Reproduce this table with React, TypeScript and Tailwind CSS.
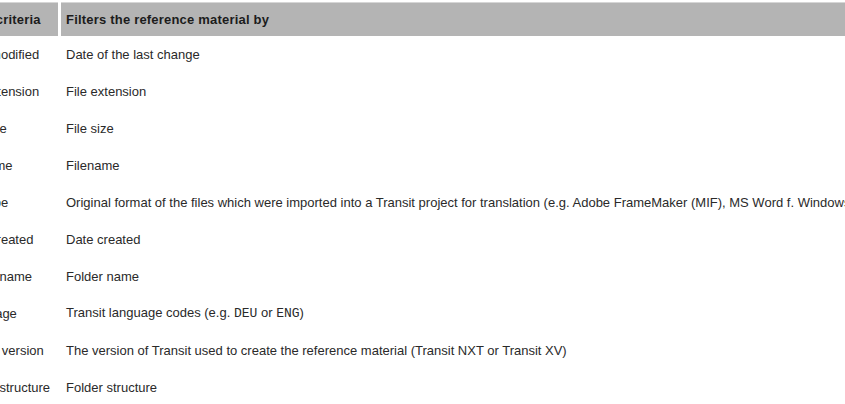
const ROWS: { criterion: string; description: React.ReactNode }[] = [
  { criterion: "Date modified", description: "Date of the last change" },
  { criterion: "File extension", description: "File extension" },
  { criterion: "File size", description: "File size" },
  { criterion: "Filename", description: "Filename" },
  {
    criterion: "File type",
    description:
      "Original format of the files which were imported into a Transit project for translation (e.g. Adobe FrameMaker (MIF), MS Word f. Windows)",
  },
  { criterion: "Date created", description: "Date created" },
  { criterion: "Folder name", description: "Folder name" },
  {
    criterion: "Language",
    description: (
      <>
        Transit language codes (e.g.{" "}
        <code className="font-['Liberation_Mono',monospace] text-[13px]">DEU</code> or{" "}
        <code className="font-['Liberation_Mono',monospace] text-[13px]">ENG</code>)
      </>
    ),
  },
  {
    criterion: "Transit version",
    description: "The version of Transit used to create the reference material (Transit NXT or Transit XV)",
  },
  { criterion: "Folder structure", description: "Folder structure" },
];

// The screenshot is a crop: the first column starts off-screen, hence the negative margin.
export default function App() {
  return (
    <div className="h-[404px] w-[845px] overflow-hidden bg-white font-['Liberation_Sans',Arial,sans-serif] text-[13px] text-[#2a2a2a]">
      <div className="ml-[-43px] grid w-[1100px] grid-cols-[101px_1fr] gap-x-[3px] pt-[2px]">
        <div className="flex h-[34px] items-center border-t border-[#d6d6d6] bg-[#b4b4b4] pl-[2px] font-bold tracking-[0.2px] text-[#1c1c1c]">
          <span>Filter criteria</span>
        </div>
        <div className="flex h-[34px] items-center border-t border-[#d6d6d6] bg-[#b4b4b4] pl-[5px] font-bold tracking-[0.2px] text-[#1c1c1c]">
          <span>Filters the reference material by</span>
        </div>
        {ROWS.map((row) => (
          <div key={row.criterion} className="contents">
            <div className="flex h-[37px] items-center whitespace-nowrap pl-[2px]">
              <span>{row.criterion}</span>
            </div>
            <div className="flex h-[37px] items-center whitespace-nowrap pl-[5px]">
              <span>{row.description}</span>
            </div>
          </div>
        ))}
      </div>
    </div>
  );
}
